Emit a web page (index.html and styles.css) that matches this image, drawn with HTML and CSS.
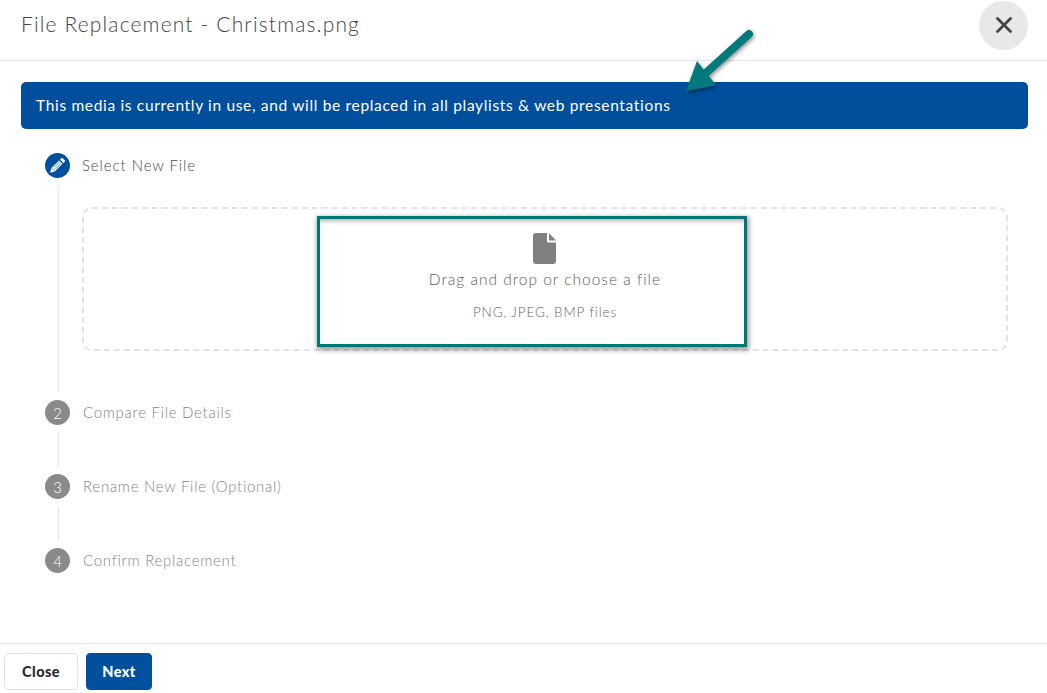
FILE: index.html
```html
<!DOCTYPE html>
<html lang="en">
<head>
<meta charset="utf-8">
<title>File Replacement</title>
<link rel="stylesheet" href="styles.css">
</head>
<body>
<div class="dialog">
  <header class="head">
    <h1 class="title">File Replacement - Christmas.png</h1>
    <button class="x" aria-label="Close">
      <svg width="16" height="16" viewBox="0 0 16 16"><path d="M1.500 1.500L14.500 14.500M14.500 1.500L1.500 14.500" stroke="#444" stroke-width="2.800" stroke-linecap="round" fill="none"/></svg>
    </button>
  </header>
  <main class="body">
    <div class="alert">This media is currently in use, and will be replaced in all playlists &amp; web presentations</div>
    <div class="steps">
      <div class="step active">
        <span class="dot"><svg width="17" height="17" viewBox="0 0 17 17"><path d="M12.300 1.300a1.100 1.100 0 0 1 1.500 0l1.900 1.900a1.100 1.100 0 0 1 0 1.500l-1.300 1.300-3.400-3.400zM10.100 3.400l3.400 3.400-7.700 7.700-4.700 1.200 1.200-4.700z" fill="#fff"/><path d="M3.200 11.300l2.500 2.500M5 10.500l5.800-5.800M6.500 12l5.800-5.800" stroke="#00509e" stroke-width=".7" fill="none"/></svg></span>
        <span class="label">Select New File</span>
      </div>
      <div class="content first">
        <div class="drop">
          <svg class="file" width="23" height="31" viewBox="0 0 23 31"><path d="M3 0h11v8a1.500 1.500 0 0 0 1.500 1.500H23V28a3 3 0 0 1-3 3H3a3 3 0 0 1-3-3V3a3 3 0 0 1 3-3zM16 0l7 7.500h-7z" fill="#808080"/></svg>
          <div class="drag">Drag and drop or choose a file</div>
          <div class="types">PNG, JPEG, BMP files</div>
          <div class="highlight"></div>
        </div>
      </div>
      <div class="step"><span class="dot">2</span><span class="label">Compare File Details</span></div>
      <div class="content"></div>
      <div class="step"><span class="dot">3</span><span class="label">Rename New File (Optional)</span></div>
      <div class="content"></div>
      <div class="step"><span class="dot">4</span><span class="label">Confirm Replacement</span></div>
    </div>
    <svg class="arrow" width="84" height="80" viewBox="0 0 84 80">
      <defs><filter id="s" x="-30%" y="-30%" width="160%" height="160%"><feDropShadow dx="1" dy="2" stdDeviation="2" flood-color="#000" flood-opacity=".45"/></filter></defs>
      <g filter="url(#s)">
        <path d="M68 6L26 44" stroke="#00797d" stroke-width="8" stroke-linecap="round" fill="none"/>
        <path d="M16 33L35 57 5 63z" fill="#00797d"/>
      </g>
    </svg>
  </main>
  <footer class="foot">
    <button class="btn">Close</button>
    <button class="btn primary">Next</button>
  </footer>
</div>
</body>
</html>
```
FILE: styles.css
```css
* { box-sizing: border-box; }
html, body { margin: 0; height: 100%; background: #fff; }
body { font-family: "Lato", "Open Sans", sans-serif; overflow: hidden; }
.dialog { width: 1047px; height: 693px; display: flex; flex-direction: column; position: relative; }
.head { height: 61px; border-bottom: 1px solid #e2e2e2; display: flex; align-items: center; justify-content: space-between; padding: 0 19px 10px 21px; }
.title { margin: 0 0 2px; font-size: 21px; font-weight: 300; color: #444; letter-spacing: 1.150px; line-height: 50px; }
.x { width: 49px; height: 49px; border-radius: 50%; border: 0; background: #e8e8e8; display: flex; align-items: center; justify-content: center; padding: 0; }
.body { flex: 1; padding: 21px 19px 0 21px; position: relative; }
.alert { height: 47px; background: #004e9c; border-radius: 5px; color: #fff; font-size: 15.500px; line-height: 47px; padding-left: 15px; letter-spacing: .67px; }
.steps { padding: 24px 20px 0 24px; }
.step { display: flex; align-items: center; height: 25px; gap: 13px; }
.dot { width: 25px; height: 25px; border-radius: 50%; background: #8a8a8a; color: #fff; font-size: 15px; font-weight: 300; display: flex; align-items: center; justify-content: center; flex: none; }
.active .dot { background: #00509e; }
.label { font-size: 15px; font-weight: 300; color: #858585; letter-spacing: .72px; padding-bottom: 2px; }
.active .label { color: #4a4a4a; letter-spacing: .92px; margin-left: -1px; }
.content { margin: 8px 0 8px 13px; border-left: 1px solid #e2e2e2; min-height: 33px; padding-left: 23px; }
.content.first { height: 206px; padding-top: 13px; }
.drop { position: relative; width: 926px; height: 144px; margin-top: 8px; border: 2px dashed #e3e3e3; border-radius: 10px; display: flex; flex-direction: column; align-items: center; padding-top: 24px; }
.file { display: block; margin-right: 2px; flex: none; }
.drag { margin-top: 3px; font-size: 15.500px; font-weight: 300; letter-spacing: 1px; color: #5e5e5e; line-height: 24px; }
.types { margin-top: 11px; font-size: 13.500px; font-weight: 300; letter-spacing: .86px; color: #666; line-height: 20px; }
.highlight { position: absolute; left: 233px; top: 7px; width: 430px; height: 131px; border: 3px solid #00767a; box-shadow: 1px 2px 5px 1px rgba(0,0,0,.4), inset 0 4px 4px -2px rgba(0,0,0,.3); }
.arrow { position: absolute; left: 681px; top: -33px; }
.foot { height: 50px; border-top: 1px solid #e2e2e2; padding: 9px 0 0 4px; display: flex; gap: 8px; align-items: flex-start; }
.btn { font-family: "Lato", sans-serif; font-weight: 900; font-size: 14.500px; height: 37px; width: 74px; border: 1px solid #e2e2e2; border-radius: 4px; background: #fff; color: #2b2b2b; letter-spacing: .4px; padding: 0; }
.primary { width: 66px; background: #00509e; border-color: #00509e; color: #fff; }
```
